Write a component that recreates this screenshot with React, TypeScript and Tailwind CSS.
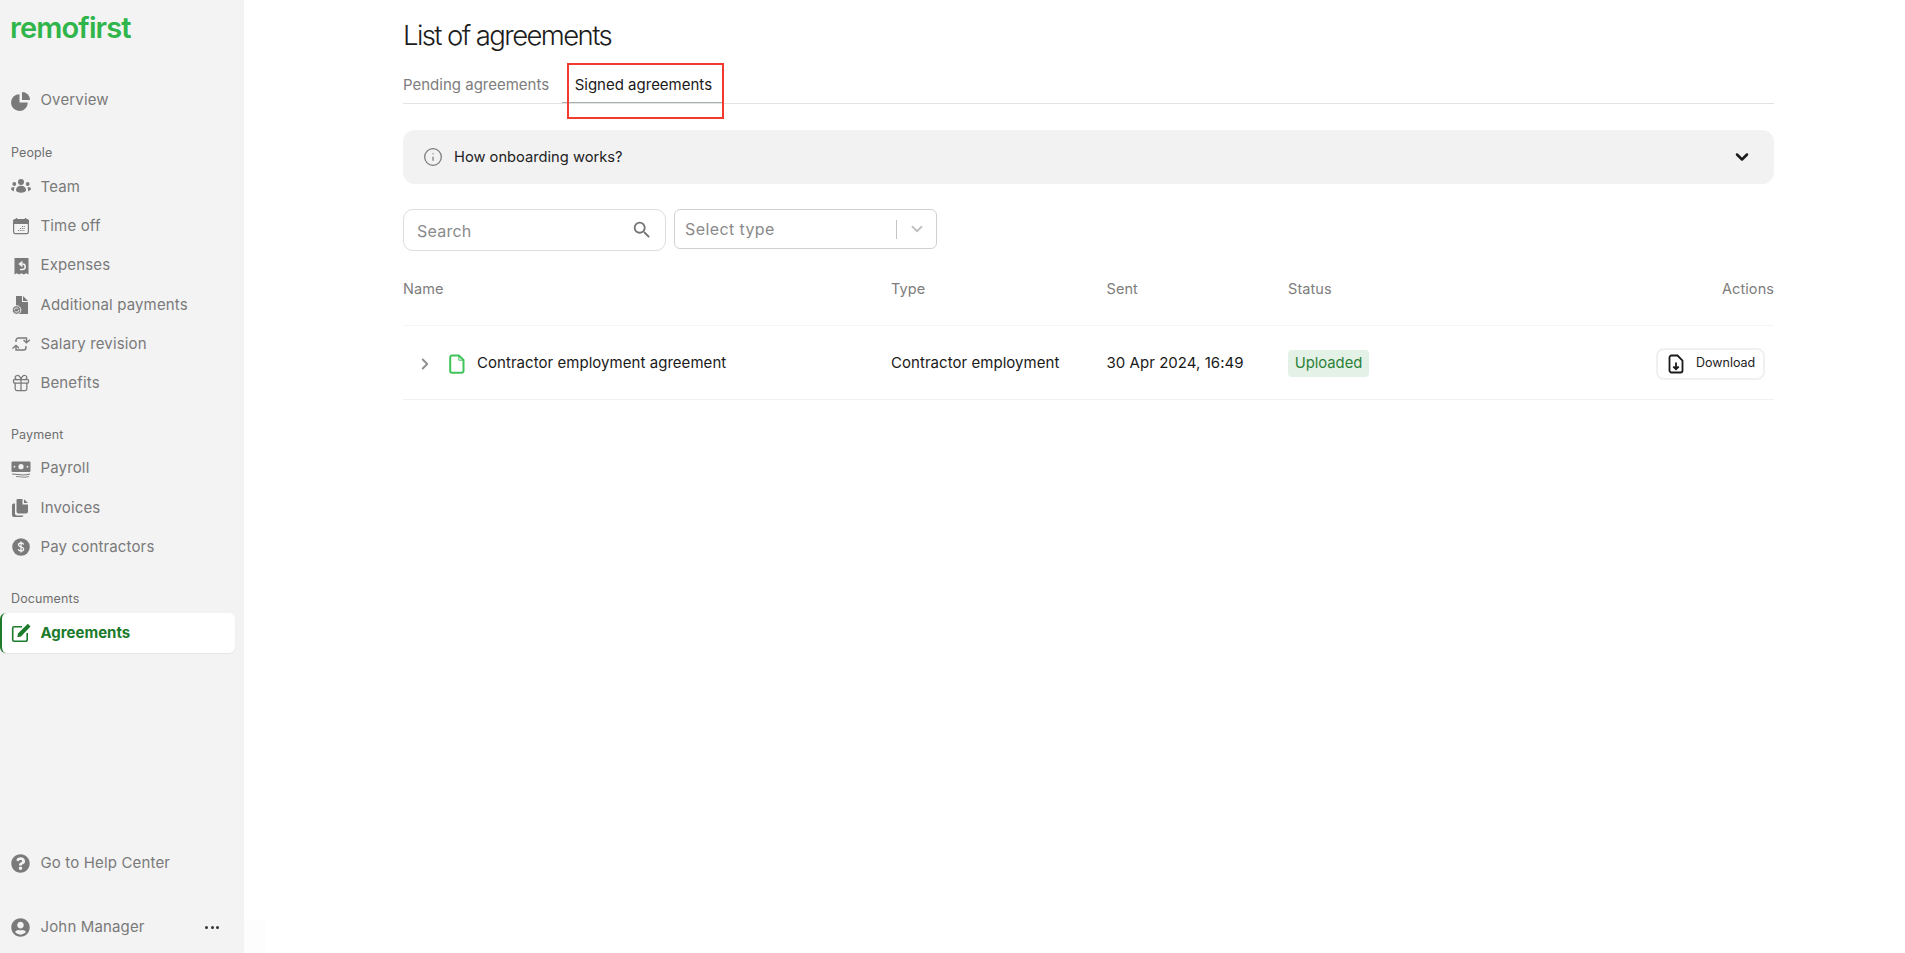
import React from "react";
import { Info, ChevronDown, ChevronRight, Gift } from "lucide-react";
import { MdSearch } from "react-icons/md";
import { FaQuestionCircle, FaUserCircle } from "react-icons/fa";

const ic = "w-[20px] h-[20px] shrink-0";

const PieIcon = () => (
  <svg viewBox="0 0 20 20" className={ic} fill="#7a7a7a">
    <path d="M8.500 3.200v8.300h8.300A8.400 8.400 0 1 1 8.500 3.200z" />
    <path d="M11 1a8 8 0 0 1 8 8h-8z" />
  </svg>
);
const TeamIcon = () => (
  <svg viewBox="0 0 20 20" className={ic} fill="#7a7a7a">
    <circle cx="10" cy="5" r="3" />
    <circle cx="3.300" cy="7" r="1.900" />
    <circle cx="16.700" cy="7" r="1.900" />
    <path d="M5 13c0-2.500 2-4.200 5-4.200s5 1.700 5 4.200c0 1.700-2.300 2.800-5 2.800S5 14.700 5 13z" />
    <path d="M3.500 10 .500 10.500.000 12.500 2.800 14.500C2.900 13 3 11.500 3.500 10zM16.500 10l3 .5.500 2-2.800 2C17.100 13 17 11.500 16.500 10z" />
  </svg>
);
const EditIcon = () => (
  <svg viewBox="0 0 20 20" className="w-[20px] h-[20px] shrink-0">
    <path d="M11 3.800H3.200A1.500 1.500 0 0 0 1.700 5.300v11.500a1.500 1.500 0 0 0 1.500 1.500h11.500a1.500 1.500 0 0 0 1.500-1.500V10" fill="none" stroke="#1b7a2b" strokeWidth="1.600" />
    <path d="M16.800.800 19.500 3.500 10 13.500 6.300 14.300 7 10.500z" fill="#1b7a2b" />
  </svg>
);
const CalendarIcon = () => (
  <svg viewBox="0 0 20 20" className={ic} fill="none">
    <path d="M2 5.500a2 2 0 0 1 2-2h12a2 2 0 0 1 2 2V8H2z" fill="#7a7a7a" />
    <rect x="2.600" y="3.600" width="14.800" height="14" rx="1.600" stroke="#7a7a7a" strokeWidth="1.200" />
    <path d="M5.500 2v3M14.500 2v3" stroke="#7a7a7a" strokeWidth="1.400" />
    <path d="M7 14.500h7M9 12.500h5M11 10.500h3" stroke="#7a7a7a" strokeWidth="1" strokeDasharray="1 .8" />
  </svg>
);
const ExpenseIcon = () => (
  <svg viewBox="0 0 20 20" className={ic}>
    <path d="M3.500 2h14v16.500l-2.300-1.200-2.400 1.200-2.300-1.200-2.400 1.200-2.300-1.200-2.300 1.200z" fill="#7a7a7a" />
    <path d="M11.500 5.500 8.500 8l3 2.300M9 8h2.500a2.600 2.600 0 0 1 0 5.400H9" fill="none" stroke="#f3f3f3" strokeWidth="1.500" />
  </svg>
);
const AdditionalIcon = () => (
  <svg viewBox="0 0 20 20" className={ic}>
    <path d="M5 1h6v6h6v12H7a6 6 0 0 0-2-8z" fill="#7a7a7a" />
    <path d="M12 1l5 5h-5z" fill="#7a7a7a" />
    <circle cx="5.500" cy="15" r="4.300" fill="#7a7a7a" stroke="#f3f3f3" strokeWidth="1" />
    <path d="M3 15a2.500 2.500 0 0 1 4.500-1M8 15a2.500 2.500 0 0 1-4.500 1" fill="none" stroke="#f3f3f3" strokeWidth="1" />
  </svg>
);
const SalaryIcon = () => (
  <svg viewBox="0 0 20 20" className={ic} fill="none" stroke="#7a7a7a" strokeWidth="1.400">
    <path d="M5 8V6.500A2.500 2.500 0 0 1 7.500 4H15.500V8" />
    <path d="M12.500 6 15.500 8.800 18.800 5.800" />
    <path d="M15 12v1.500a2.500 2.500 0 0 1-2.500 2.500H5v-4.200" />
    <path d="M1.500 14.500 5 11.500 8 14.300" />
  </svg>
);
const PayrollIcon = () => (
  <svg viewBox="0 0 20 20" className="w-[20px] h-[20px] shrink-0">
    <rect x="0.500" y="2.500" width="19" height="10.500" rx="1" fill="#7a7a7a" />
    <circle cx="10" cy="7.700" r="2.600" fill="#f3f3f3" />
    <circle cx="3.500" cy="7.700" r="0.900" fill="#f3f3f3" />
    <circle cx="16.500" cy="7.700" r="0.900" fill="#f3f3f3" />
    <path d="M1 15c5 0 7 1 11 1s5-.5 7-1" fill="none" stroke="#7a7a7a" strokeWidth="1.100" />
    <path d="M5 17.500c4 0 6 .7 8 .7s3-.3 5-.7" fill="none" stroke="#7a7a7a" strokeWidth="0.900" />
  </svg>
);
const InvoicesIcon = () => (
  <svg viewBox="0 0 20 20" className={ic}>
    <path d="M4 5.500H2.800A1.800 1.800 0 0 0 1 7.300v10A1.800 1.800 0 0 0 2.800 19h8a1.800 1.800 0 0 0 1.700-1.500H6a2 2 0 0 1-2-2z" fill="#7a7a7a" />
    <path d="M6.500 1h5v5.500H17V13.500A2 2 0 0 1 15 15.500H7.500a2 2 0 0 1-2-2V2a1 1 0 0 1 1-1z" fill="#7a7a7a" />
    <path d="M13 1.200 17 5h-4z" fill="#7a7a7a" />
  </svg>
);
const DollarIcon = () => (
  <svg viewBox="0 0 20 20" className={ic}>
    <circle cx="10" cy="10" r="8.800" fill="#7a7a7a" />
    <path d="M12.600 7.600C12.400 6.600 11.400 6 10 6 8.500 6 7.500 6.800 7.500 7.900c0 2.600 5.200 1.500 5.200 4.200 0 1.200-1.100 1.900-2.700 1.900-1.500 0-2.500-.7-2.800-1.800M10 4.600v10.800" fill="none" stroke="#f3f3f3" strokeWidth="1.300" />
  </svg>
);

type ItemProps = { icon: React.ReactNode; label: string };
const Item = ({ icon, label }: ItemProps) => (
  <div className="flex items-center h-[39.300px] pl-[11px]">
    <span className="w-[29.500px] flex">{icon}</span>
    <span className="text-[15px] text-[#7a7a7a] tracking-[0.01em]">{label}</span>
  </div>
);
const Section = ({ label }: { label: string }) => (
  <div className="h-[20px] flex items-center pl-[11px] text-[12.500px] text-[#6f6f6f] tracking-[0.01em]">{label}</div>
);

export default function App() {
  return (
    <div
      className="relative flex h-[953px] w-[1905px] overflow-hidden bg-white text-[#1a1a1a]"
      style={{ fontFamily: "Inter, 'Liberation Sans', sans-serif" }}
    >
      <aside className="flex h-full w-[244px] shrink-0 flex-col bg-[#f3f3f3]">
        <div className="h-[81px] pl-[10px] pt-[8px] text-[29px] leading-[40px] font-semibold tracking-[-0.03em] text-[#2fb54a]">remofirst</div>
        <Item icon={<PieIcon />} label="Overview" />
        <div className="h-[23px]" />
        <Section label="People" />
        <div className="h-[4px]" />
        <Item icon={<TeamIcon />} label="Team" />
        <Item icon={<CalendarIcon />} label="Time off" />
        <Item icon={<ExpenseIcon />} label="Expenses" />
        <Item icon={<AdditionalIcon />} label="Additional payments" />
        <Item icon={<SalaryIcon />} label="Salary revision" />
        <Item icon={<Gift size={20} color="#7a7a7a" strokeWidth={1.500} />} label="Benefits" />
        <div className="h-[22px]" />
        <Section label="Payment" />
        <div className="h-[4px]" />
        <Item icon={<PayrollIcon />} label="Payroll" />
        <Item icon={<InvoicesIcon />} label="Invoices" />
        <Item icon={<DollarIcon />} label="Pay contractors" />
        <div className="h-[22px]" />
        <Section label="Documents" />
        <div className="h-[4px]" />
        <div className="flex h-[40px] w-[235px] items-center rounded-[6px] border-l-2 border-[#1f7a2c] bg-white pl-[9px] shadow-[0_1px_2px_rgba(0,0,0,0.06)]">
          <span className="flex w-[29.500px]"><EditIcon /></span>
          <span className="text-[15px] font-bold text-[#1b7a2b]">Agreements</span>
        </div>
        <div className="flex-1" />
        <Item icon={<FaQuestionCircle size={19} color="#7a7a7a" />} label="Go to Help Center" />
        <div className="h-[25px]" />
        <div className="flex h-[39.300px] items-center pl-[11px] pr-[25px]">
          <span className="flex w-[29.500px]"><FaUserCircle size={19} color="#7a7a7a" /></span>
          <span className="flex-1 text-[15px] text-[#7a7a7a] tracking-[0.01em]">John Manager</span>
          <span className="flex gap-[2.500px]">
            <i className="h-[3px] w-[3px] rounded-full bg-[#333]" />
            <i className="h-[3px] w-[3px] rounded-full bg-[#333]" />
            <i className="h-[3px] w-[3px] rounded-full bg-[#333]" />
          </span>
        </div>
        <div className="h-[6px]" />
      </aside>
      <div className="absolute bottom-0 left-[244px] h-[33px] w-[21px] bg-[#fdfdfd]" />

      <main className="min-w-0 flex-1 pl-[159px] pr-[131px]">
        <h1 className="mt-[16px] h-[38px] text-[27.500px] leading-[38px] font-[350] tracking-[-0.058em] text-[#1c1c1c]">List of agreements</h1>
        <div className="mt-[10px] flex h-[40px] items-stretch border-b border-[#e3e3e3]">
          <div className="flex items-center pr-[13px] pt-[3px] text-[15px] text-[#7d7d7d]">Pending agreements</div>
          <div className="relative flex items-center border-b border-[#a9b3a9] pl-[12.500px] pr-[12px] pt-[4px] text-[15px] text-[#1a1a1a]">
            Signed agreements
            <span className="absolute left-[5px] top-[-1px] h-[56px] w-[157px] border-[2.500px] border-[#f4392e]" />
          </div>
        </div>

        <div className="mt-[26px] flex h-[54px] items-center rounded-[12px] bg-[#f2f2f2] pl-[20px] pr-[22px]">
          <Info size={20} color="#7a7a7a" strokeWidth={1.500} />
          <span className="ml-[11px] flex-1 text-[14.700px] text-[#222]">How onboarding works?</span>
          <ChevronDown size={20} color="#1a1a1a" strokeWidth={3} />
        </div>

        <div className="mt-[25px] flex items-start gap-[8px]">
          <div className="flex h-[42px] w-[263px] items-center rounded-[10px] border border-[#dddddd] pl-[13px] pr-[12px]">
            <span className="flex-1 pt-[1px] text-[16px] tracking-[0.015em] text-[#8a8a8a]">Search</span>
            <MdSearch size={22} color="#757575" />
          </div>
          <div className="flex h-[40px] w-[263px] items-center rounded-[6px] border border-[#d0d0d0] pl-[10px]">
            <span className="flex-1 text-[16px] tracking-[0.025em] text-[#8a8a8a]">Select type</span>
            <span className="h-[19px] w-px bg-[#c4c4c4]" />
            <span className="flex w-[39px] justify-center"><ChevronDown size={18} color="#c0c0c0" strokeWidth={2.500} /></span>
          </div>
        </div>

        <div className="mt-[2px] grid h-[73px] grid-cols-[488px_215.500px_181.500px_1fr_auto] items-center border-b border-[#f5f5f5] text-[14.500px] tracking-[0.005em] text-[#7d7d7d]">
          <span>Name</span>
          <span>Type</span>
          <span>Sent</span>
          <span>Status</span>
          <span>Actions</span>
        </div>
        <div className="grid h-[74px] grid-cols-[488px_215.500px_181.500px_1fr_auto] items-center border-b border-[#f2f2f2] pt-[2px] text-[15px] text-[#1a1a1a]">
          <div className="flex items-center">
            <span className="ml-[13px] flex w-[33px] pt-[1px]"><ChevronRight size={18} color="#8f8f8f" strokeWidth={2.500} /></span>
            <svg viewBox="0 0 16 20" className="mr-[12px] h-[20px] w-[16px] shrink-0" fill="none" stroke="#3fc35a" strokeWidth="2">
              <path d="M3 1.500h6.800L14.500 6v11a1.800 1.800 0 0 1-1.800 1.800H3A1.800 1.800 0 0 1 1.200 17V3.300A1.800 1.800 0 0 1 3 1.500z" />
              <path d="M9.800 1.500V6.200h4.500" strokeWidth="1" />
            </svg>
            <span className="tracking-[0.003em]">Contractor employment agreement</span>
          </div>
          <span className="tracking-[0.003em]">Contractor employment</span>
          <span className="tracking-[0.003em]">30 Apr 2024, 16:49</span>
          <div>
            <span className="inline-flex h-[27px] w-[81px] items-center justify-center rounded-[4px] bg-[#e4f1e6] text-[14.800px] text-[#2b7f38]">Uploaded</span>
          </div>
          <div className="mr-[9px] flex h-[32px] w-[109px] items-center rounded-[8px] border-2 border-[#f0f0f0] pl-[10px] text-[12.500px] text-[#222]">
            <svg viewBox="0 0 16 20" className="mr-[12px] h-[20px] w-[16px] shrink-0" fill="none" stroke="#1a1a1a" strokeWidth="1.800">
              <path d="M3.500 1.500h6L14.500 6.500v10a2 2 0 0 1-2 2h-9a2 2 0 0 1-2-2v-13a2 2 0 0 1 2-2z" />
              <path d="M8 8.500v6.500M5.300 12.500 8 15.200l2.700-2.700" />
            </svg>
            Download
          </div>
        </div>
      </main>
    </div>
  );
}
